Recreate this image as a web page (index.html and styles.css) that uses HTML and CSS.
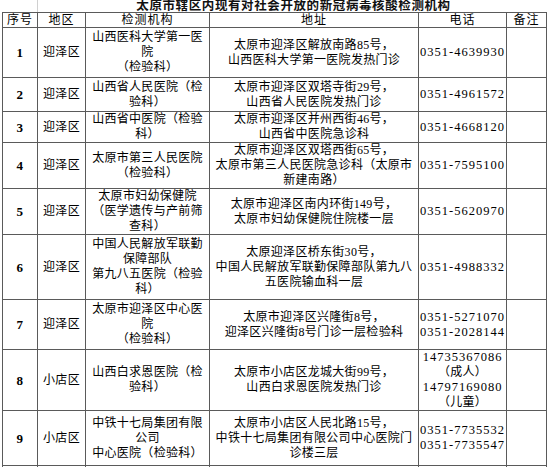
FILE: index.html
```html
<!DOCTYPE html>
<html lang="zh-CN">
<head>
<meta charset="utf-8">
<title>太原市辖区内现有对社会开放的新冠病毒核酸检测机构</title>
<link rel="stylesheet" href="styles.css">
</head>
<body>
<div class="page">
<table class="grid">
  <colgroup>
    <col class="c-no"><col class="c-area"><col class="c-org"><col class="c-addr"><col class="c-tel"><col class="c-note">
  </colgroup>
  <tr class="r-title">
    <td class="t-blank"></td>
    <td class="t-title" colspan="6">太原市辖区内现有对社会开放的新冠病毒核酸检测机构</td>
  </tr>
  <tr class="r-head">
    <th>序号</th><th>地区</th><th>检测机构</th><th>地址</th><th>电话</th><th>备注</th>
  </tr>
  <tr class="h50">
    <td class="no">1</td><td>迎泽区</td>
    <td>山西医科大学第一医<br>院<br>（检验科）</td>
    <td>太原市迎泽区解放南路85号，<br>山西医科大学第一医院发热门诊</td>
    <td class="tel">0351-4639930</td><td></td>
  </tr>
  <tr class="h34">
    <td class="no">2</td><td>迎泽区</td>
    <td>山西省人民医院（检<br>验科）</td>
    <td>太原市迎泽区双塔寺街29号，<br>山西省人民医院发热门诊</td>
    <td class="tel">0351-4961572</td><td></td>
  </tr>
  <tr class="h31">
    <td class="no">3</td><td>迎泽区</td>
    <td>山西省中医院（检验<br>科）</td>
    <td>太原市迎泽区并州西街46号，<br>山西省中医院急诊科</td>
    <td class="tel">0351-4668120</td><td></td>
  </tr>
  <tr class="h45">
    <td class="no">4</td><td>迎泽区</td>
    <td>太原市第三人民医院<br>（检验科）</td>
    <td>太原市迎泽区双塔西街65号，<br>太原市第三人民医院急诊科（太原市<br>新建南路）</td>
    <td class="tel">0351-7595100</td><td></td>
  </tr>
  <tr class="h45">
    <td class="no">5</td><td>迎泽区</td>
    <td>太原市妇幼保健院<br>（医学遗传与产前筛<br>查科）</td>
    <td>太原市迎泽区南内环街149号，<br>太原市妇幼保健院住院楼一层</td>
    <td class="tel">0351-5620970</td><td></td>
  </tr>
  <tr class="h65">
    <td class="no">6</td><td>迎泽区</td>
    <td>中国人民解放军联勤<br>保障部队<br>第九八五医院（检验<br>科）</td>
    <td>太原迎泽区桥东街30号，<br>中国人民解放军联勤保障部队第九八<br>五医院输血科一层</td>
    <td class="tel">0351-4988332</td><td></td>
  </tr>
  <tr class="h50">
    <td class="no">7</td><td>迎泽区</td>
    <td>太原市迎泽区中心医<br>院<br>（检验科）</td>
    <td>太原市迎泽区兴隆街8号，<br>迎泽区兴隆街8号门诊一层检验科</td>
    <td class="tel">0351-5271070<br>0351-2028144</td><td></td>
  </tr>
  <tr class="h60">
    <td class="no">8</td><td>小店区</td>
    <td>山西白求恩医院（检<br>验科）</td>
    <td>太原市小店区龙城大街99号，<br>山西白求恩医院发热门诊</td>
    <td class="tel">14735367086<br><span class="cj">（成人）</span><br>14797169080<br><span class="cj">（儿童）</span></td><td></td>
  </tr>
  <tr class="h55">
    <td class="no">9</td><td>小店区</td>
    <td>中铁十七局集团有限<br>公司<br>中心医院（检验科）</td>
    <td>太原市小店区人民北路15号，<br>中铁十七局集团有限公司中心医院门<br>诊楼三层</td>
    <td class="tel">0351-7735532<br>0351-7735547</td><td></td>
  </tr>
  <tr class="h10">
    <td></td><td></td><td></td><td></td><td></td><td></td>
  </tr>
</table>
</div>
</body>
</html>
```
FILE: styles.css
```css
html, body {
  margin: 0;
  padding: 0;
  background: #ffffff;
}
.page {
  padding-left: 2px;
  width: 548px;
  height: 467px;
  overflow: hidden;
  box-sizing: border-box;
}
.grid {
  border-collapse: collapse;
  table-layout: fixed;
  width: 545px;
  font-family: "Liberation Serif", "Noto Sans CJK SC", serif;
  font-size: 12px;
  line-height: 15px;
  letter-spacing: 0.3px;
  color: #000;
}
.c-no { width: 35px; }
.c-area { width: 48px; }
.c-org { width: 124px; }
.c-addr { width: 209px; }
.c-tel { width: 88px; }
.c-note { width: 40px; }
.grid td, .grid th {
  border: 1px solid #5a5a5a;
  padding: 0 1px;
  text-align: center;
  vertical-align: middle;
  overflow: hidden;
  white-space: nowrap;
}
.grid th {
  font-weight: normal;
  height: 14px;
  line-height: 14px;
  letter-spacing: 1px;
}
.r-title td {
  border-top: none;
  border-left: none;
  border-right: none;
  height: 12px;
  padding: 0;
}
.grid .t-blank {
  border-right: 1px solid #d0d0d0;
}
.grid .t-title {
  font-weight: bold;
  font-size: 12.5px;
  line-height: 12px;
  letter-spacing: 0.6px;
  color: #111;
  padding: 0 0 0 2px;
  vertical-align: bottom;
  overflow: visible;
}
.grid .no {
  font-weight: bold;
  font-size: 13px;
}
.grid .tel {
  letter-spacing: 1px;
  font-size: 12.5px;
}
.grid .tel .cj {
  letter-spacing: 0.3px;
  font-size: 12px;
}
.h10 td { height: 9px; }
.h31 td { height: 30px; }
.h34 td { height: 33px; }
.h45 td { height: 44px; }
.h50 td { height: 49px; }
.h55 td { height: 54px; }
.h60 td { height: 59px; }
.h65 td { height: 64px; }
```
